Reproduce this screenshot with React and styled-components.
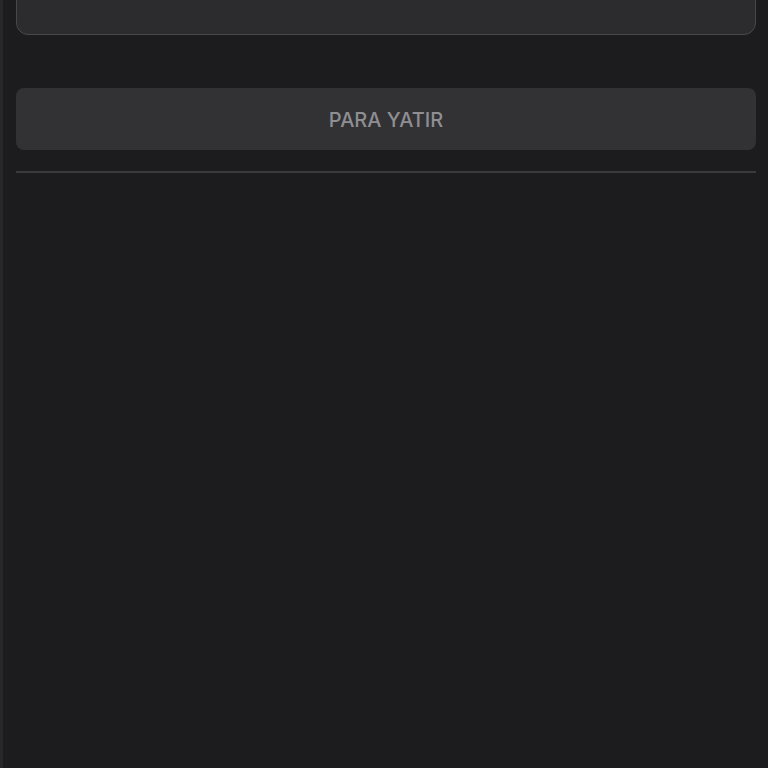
import React from "react";
import styled, { createGlobalStyle } from "styled-components";

const Global = createGlobalStyle`
  html, body { margin: 0; padding: 0; background: #1c1c1e; }
  body { font-family: Inter, "Noto Sans", "Liberation Sans", sans-serif; }
  #root { min-height: 100vh; }
`;

const Page = styled.div`
  display: flex;
  min-height: 768px;
  background: #1c1c1e;
  overflow: hidden;
`;

const EdgeStrip = styled.div`
  width: 3px;
  flex: 0 0 3px;
  background: #272728;
`;

const Content = styled.div`
  flex: 1;
  display: flex;
  flex-direction: column;
  padding: 0 12px 0 13px;
`;

const Card = styled.div`
  height: 101px;
  margin-top: -66px;
  background: #2c2c2e;
  border: 1.5px solid #48484a;
  border-radius: 12px;
  box-sizing: border-box;
`;

const DepositButton = styled.button`
  margin-top: 53px;
  height: 62px;
  border: none;
  border-radius: 8px;
  background: #323234;
  color: #8e8e93;
  font-family: Inter, "Noto Sans", "Liberation Sans", sans-serif;
  font-size: 20px;
  font-weight: 500;
  padding-top: 2px;
  cursor: pointer;
`;

const Divider = styled.hr`
  margin: 21px 0 0;
  border: none;
  height: 2px;
  background: #3a3a3c;
`;

export default function App() {
  return (
    <>
      <Global />
      <Page>
        <EdgeStrip />
        <Content>
          <Card />
          <DepositButton>PARA YATIR</DepositButton>
          <Divider />
        </Content>
      </Page>
    </>
  );
}
